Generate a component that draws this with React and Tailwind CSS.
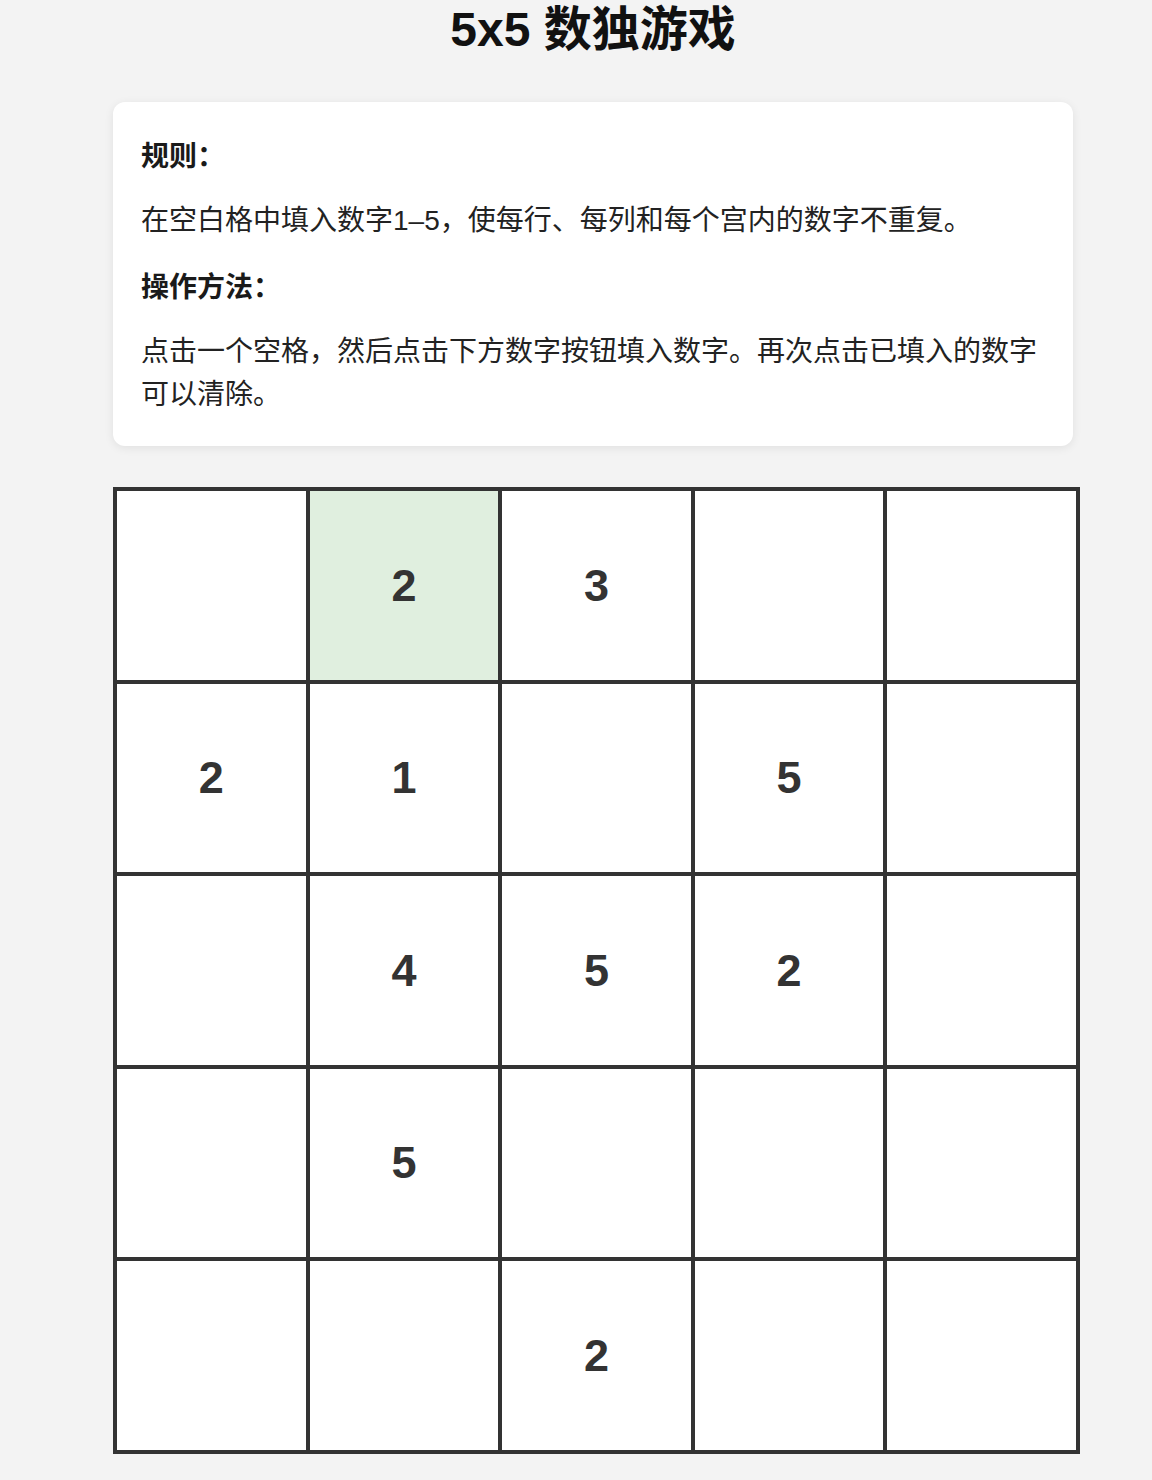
import React, { useState } from 'react';

const initialBoard = [
  ['', '2', '3', '', ''],
  ['2', '1', '', '5', ''],
  ['', '4', '5', '2', ''],
  ['', '5', '', '', ''],
  ['', '', '2', '', ''],
];

const App = () => {
  const [selected, setSelected] = useState([0, 1]);

  return (
    <div
      className="min-h-screen bg-[#f3f3f3] text-[#1a1a1a]"
      style={{ fontFamily: '"Liberation Sans", "Noto Sans CJK SC", sans-serif' }}
    >
      <div className="ml-[113px] w-[960px]">
        {/* Title */}
        <h1 className="text-center text-[48px] font-bold leading-[60px] text-[#111]">5x5 数独游戏</h1>

        {/* Instructions */}
        <div className="mt-[42px] bg-white rounded-[12px] shadow-[0_2px_10px_rgba(0,0,0,0.08)] px-[28px] pt-[34px] pb-[30px]">
          <h3 className="text-[28px] font-bold leading-[42px]">规则：</h3>
          <p className="mt-[22px] text-[28px] leading-[42px] text-[#222]">
            在空白格中填入数字1–5，使每行、每列和每个宫内的数字不重复。
          </p>
          <h3 className="mt-[25px] text-[28px] font-bold leading-[42px]">操作方法：</h3>
          <p className="mt-[21px] text-[28px] leading-[43px] text-[#222]">
            点击一个空格，然后点击下方数字按钮填入数字。再次点击已填入的数字可以清除。
          </p>
        </div>

        {/* Board */}
        <div className="mt-[41px] grid w-max grid-cols-[repeat(5,192.6px)] border-2 border-[#333]">
          {initialBoard.map((row, r) =>
            row.map((val, c) => {
              const isSel = selected[0] === r && selected[1] === c;
              return (
                <div
                  key={`${r}-${c}`}
                  onClick={() => setSelected([r, c])}
                  className={`h-[192.6px] border-2 border-[#333] flex items-center justify-center text-[45px] font-bold text-[#333] cursor-pointer ${
                    isSel ? 'bg-[#e0efdf]' : 'bg-white'
                  }`}
                >
                  {val}
                </div>
              );
            })
          )}
        </div>
        <div className="h-[27px]"></div>
      </div>
    </div>
  );
};

export default App;
